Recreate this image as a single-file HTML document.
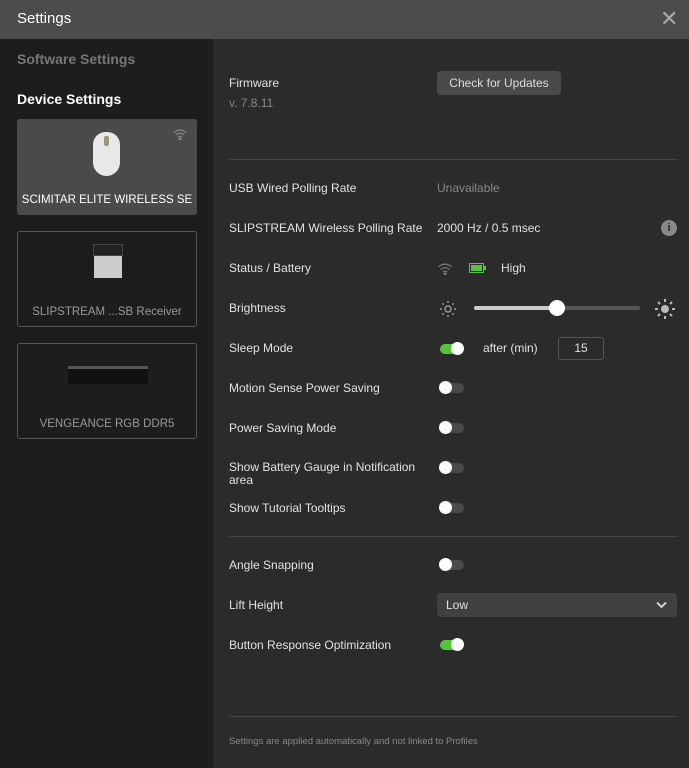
<!DOCTYPE html><html><head><meta charset="utf-8"><style>
*{margin:0;padding:0;box-sizing:border-box}
body{width:689px;height:768px;background:#2b2b2b;font-family:"Liberation Sans",sans-serif;position:relative;overflow:hidden;color:#e0e0e0}
.a{position:absolute;white-space:nowrap}
.l{position:absolute;left:229px;font-size:12px;color:#e2e2e2}
.hr{position:absolute;left:229px;width:448px;height:1px;background:#484848}
.tg{position:absolute;width:24px;height:10px;border-radius:5px;background:#4a4a4a}
.tg i{position:absolute;top:-2px;width:13px;height:13px;border-radius:50%;background:#fff;left:-1px}
.tg.on{background:#55c43a;width:22px}.tg.on i{left:11px}
.card{position:absolute;left:17px;width:180px;height:96px;border:1px solid #555;border-radius:3px;font-size:11.5px;text-align:center}
</style></head><body>
<div class="a" style="left:0;top:0;width:689px;height:39px;background:#4c4c4c"></div>
<div class="a" style="left:17px;top:10px;font-size:15px;color:#fff">Settings</div>
<div class="a" style="left:660px;top:6px;font-size:22px;color:#aaa">✕</div>
<div class="a" style="left:0;top:39px;width:213px;height:729px;background:#1d1d1d"></div>
<div class="a" style="left:17px;top:51px;font-size:14px;color:#777;font-weight:bold">Software Settings</div>
<div class="a" style="left:17px;top:91px;font-size:14px;color:#fff;font-weight:bold">Device Settings</div>
<div class="card" style="top:119px;background:#4a4a4a;border-color:#4a4a4a;color:#fff">
<div style="position:absolute;left:75px;top:12px;width:27px;height:44px;border-radius:13px 13px 14px 14px;background:#e8e8e8"></div>
<div style="position:absolute;left:86px;top:16px;width:5px;height:10px;background:#9a9a70;border-radius:2px"></div>
<svg style="position:absolute;right:9px;top:8px" width="14" height="12" viewBox="0 0 14 12" fill="none" stroke="#888" stroke-width="1.2"><path d="M1 4.5a8.5 8.5 0 0 1 12 0M3 7a5.5 5.5 0 0 1 8 0M5 9.3a2.5 2.5 0 0 1 4 0"/><circle cx="7" cy="11" r=".8" fill="#888"/></svg>
<div style="position:absolute;left:0;right:0;top:74px">SCIMITAR ELITE WIRELESS SE</div></div>
<div class="card" style="top:231px;color:#999">
<div style="position:absolute;left:75px;top:12px;width:30px;height:12px;background:#222;border:1px solid #444"></div>
<div style="position:absolute;left:76px;top:24px;width:28px;height:22px;background:#ccc"></div>
<div style="position:absolute;left:0;right:0;top:74px">SLIPSTREAM ...SB Receiver</div></div>
<div class="card" style="top:343px;color:#999">
<div style="position:absolute;left:50px;top:22px;width:80px;height:18px;background:#111;border-top:3px solid #555"></div>
<div style="position:absolute;left:0;right:0;top:74px">VENGEANCE RGB DDR5</div></div>

<div class="l" style="top:76px">Firmware</div>
<div class="l" style="top:96px;color:#888">v. 7.8.11</div>
<div class="a" style="left:437px;top:71px;width:124px;height:24px;background:#4a4a4a;border-radius:4px;font-size:12px;color:#ddd;text-align:center;line-height:24px">Check for Updates</div>
<div class="hr" style="top:159px"></div>
<div class="l" style="top:181px">USB Wired Polling Rate</div>
<div class="a" style="left:437px;top:181px;font-size:12px;color:#888">Unavailable</div>
<div class="l" style="top:221px">SLIPSTREAM Wireless Polling Rate</div>
<div class="a" style="left:437px;top:221px;font-size:12px">2000 Hz / 0.5 msec</div>
<div class="a" style="left:661px;top:220px;width:16px;height:16px;border-radius:50%;background:#888;color:#2b2b2b;font-size:11px;font-weight:bold;text-align:center;line-height:16px">i</div>
<div class="l" style="top:261px">Status / Battery</div>
<svg class="a" style="left:437px;top:262px" width="16" height="13" viewBox="0 0 14 12" fill="none" stroke="#777" stroke-width="1.2"><path d="M1 4.5a8.5 8.5 0 0 1 12 0M3 7a5.5 5.5 0 0 1 8 0M5 9.3a2.5 2.5 0 0 1 4 0"/><circle cx="7" cy="11" r=".8" fill="#777"/></svg>
<div class="a" style="left:469px;top:263px;width:15px;height:10px;border:1.5px solid #55c43a;padding:1px"><div style="width:100%;height:100%;background:#55c43a"></div></div>
<div class="a" style="left:484px;top:266px;width:2px;height:4px;background:#55c43a"></div>
<div class="a" style="left:501px;top:261px;font-size:12px">High</div>
<div class="l" style="top:301px">Brightness</div>
<svg class="a" style="left:439px;top:300px" width="18" height="18" viewBox="0 0 18 18" stroke="#999" stroke-width="1.5" fill="none"><circle cx="9" cy="9" r="3"/><path d="M9 1v2M9 15v2M1 9h2M15 9h2M3.3 3.3l1.4 1.4M13.3 13.3l1.4 1.4M3.3 14.7l1.4-1.4M13.3 4.7l1.4-1.4"/></svg>
<div class="a" style="left:474px;top:306px;width:166px;height:4px;border-radius:2px;background:#555"></div>
<div class="a" style="left:474px;top:306px;width:83px;height:4px;border-radius:2px;background:#ccc"></div>
<div class="a" style="left:549px;top:300px;width:16px;height:16px;border-radius:50%;background:#fff"></div>
<svg class="a" style="left:654px;top:298px" width="22" height="22" viewBox="0 0 22 22" stroke="#bbb" stroke-width="2" fill="#bbb"><circle cx="11" cy="11" r="4" stroke="none"/><path d="M11 1v3M11 18v3M1 11h3M18 11h3M4 4l2 2M16 16l2 2M4 18l2-2M16 6l2-2"/></svg>
<div class="l" style="top:341px">Sleep Mode</div>
<div class="tg on" style="left:440px;top:344px"><i></i></div>
<div class="a" style="left:483px;top:341px;font-size:12px">after (min)</div>
<div class="a" style="left:558px;top:337px;width:46px;height:23px;border:1px solid #555;border-radius:3px;font-size:12px;text-align:center;line-height:21px">15</div>
<div class="l" style="top:381px">Motion Sense Power Saving</div><div class="tg" style="left:440px;top:383px"><i></i></div>
<div class="l" style="top:421px">Power Saving Mode</div><div class="tg" style="left:440px;top:423px"><i></i></div>
<div class="l" style="top:461px;line-height:13px">Show Battery Gauge in Notification<br>area</div><div class="tg" style="left:440px;top:463px"><i></i></div>
<div class="l" style="top:501px">Show Tutorial Tooltips</div><div class="tg" style="left:440px;top:503px"><i></i></div>
<div class="hr" style="top:536px"></div>
<div class="l" style="top:558px">Angle Snapping</div><div class="tg" style="left:440px;top:560px"><i></i></div>
<div class="l" style="top:598px">Lift Height</div>
<div class="a" style="left:437px;top:593px;width:240px;height:24px;background:#404040;border-radius:3px;font-size:12px;padding-left:9px;line-height:24px">Low<svg style="position:absolute;right:10px;top:8px" width="11" height="8" viewBox="0 0 11 8" fill="none" stroke="#ddd" stroke-width="1.8"><path d="M1 1.5l4.5 4.5L10 1.5"/></svg></div>
<div class="l" style="top:638px">Button Response Optimization</div><div class="tg on" style="left:440px;top:640px"><i></i></div>
<div class="hr" style="top:716px"></div>
<div class="l" style="top:736px;font-size:9.5px;color:#888">Settings are applied automatically and not linked to Profiles</div>
</body></html>
